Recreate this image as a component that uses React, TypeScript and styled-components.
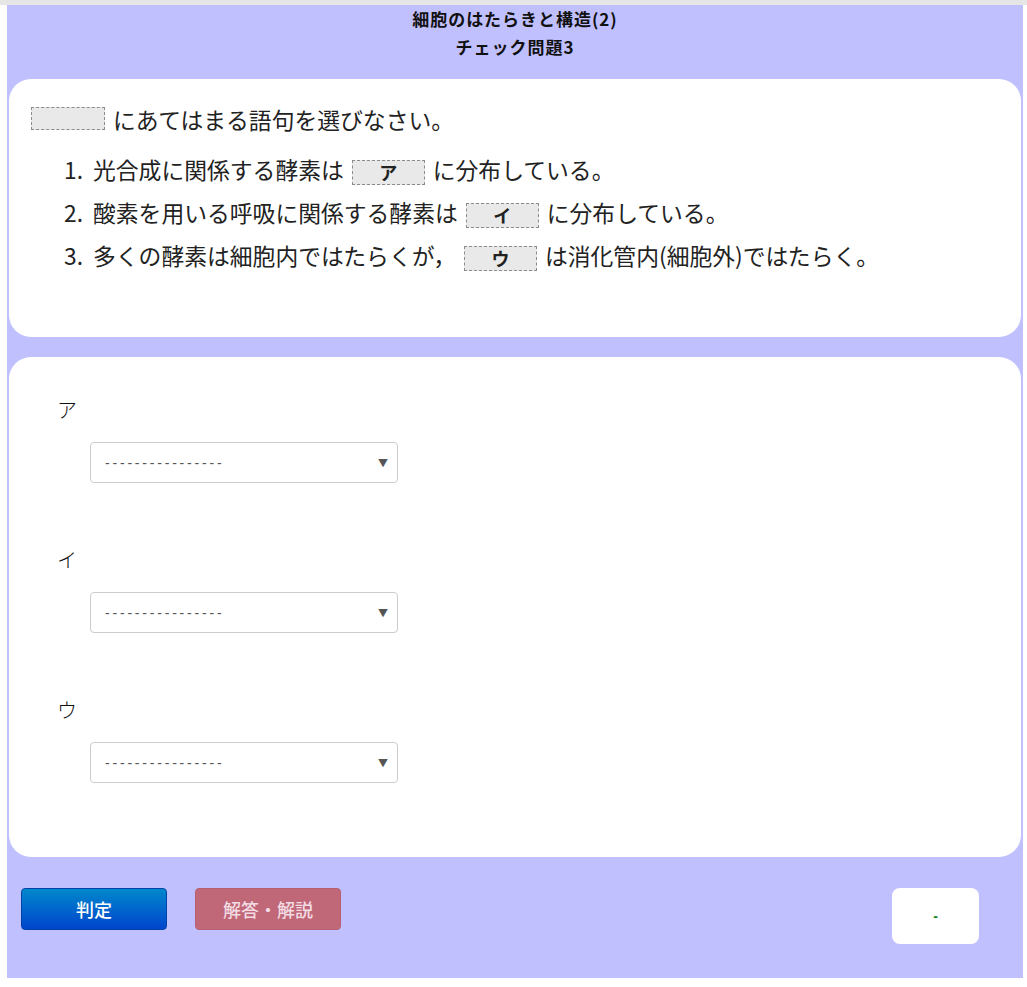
import React from 'react';
import styled, { createGlobalStyle } from 'styled-components';

const GlobalStyle = createGlobalStyle`
    body {
        margin: 0;
        background: #ffffff;
        font-family: "Noto Sans CJK JP", "Noto Sans", sans-serif;
        color: #222;
    }
`;

const TopLine = styled.div`
    height: 5px;
    background: #e6e6e6;
`;

const Outer = styled.div`
    padding: 0 4px 0 7px;
`;

const Stage = styled.div`
    background: #c0c0ff;
    height: 973px;
    display: flex;
    flex-direction: column;
    padding: 0 2px;
`;

const Header = styled.header`
    height: 74px;
    display: flex;
    flex-direction: column;
    align-items: center;
    font-size: 17px;
    font-weight: 700;
    line-height: 28px;
    letter-spacing: 1px;
    color: #111;
`;

const Card = styled.section<{ $height: number }>`
    background: #fff;
    border-radius: 22px;
    height: ${p => p.$height}px;
    box-sizing: border-box;
`;

const QuestionCard = styled(Card)`
    padding: 19px 22px 0;
    font-size: 22.8px;
    line-height: 43px;
    color: #222;
`;

const AnswerCard = styled(Card)`
    margin-top: 20px;
    padding: 38px 0 0 48px;
    display: flex;
    flex-direction: column;
    gap: 62px;
`;

const Blank = styled.span<{ $w: number; $first?: boolean }>`
    display: inline-flex;
    align-items: center;
    justify-content: center;
    width: ${p => p.$w}px;
    height: ${p => (p.$first ? 23 : 25)}px;
    box-sizing: border-box;
    border: 1px dashed #8c8c8c;
    background: #e9e9e9;
    vertical-align: -1px;
    font-size: 18px;
    font-weight: 700;
    line-height: 1;
    margin: 0 8px 0 ${p => (p.$first ? 0 : 8)}px;
    color: #222;
`;

const Intro = styled.div`
    margin-bottom: 7px;
`;

const List = styled.ol`
    margin: 0;
    padding-left: 33px;
    list-style: none;
`;

const Item = styled.li``;

const Num = styled.span`
    display: inline-block;
    width: 29px;
`;

const Group = styled.div`
    display: flex;
    flex-direction: column;
    gap: 17px;
`;

const Label = styled.div`
    font-size: 20px;
    line-height: 30px;
    font-weight: 300;
    color: #111;
`;

const SelectWrap = styled.div`
    position: relative;
    margin-left: 33px;
    width: 308px;
`;

const Select = styled.select`
    appearance: none;
    width: 100%;
    height: 41px;
    box-sizing: border-box;
    border: 1px solid #cccccc;
    border-radius: 4px;
    background: #fff;
    padding: 0 14px;
    font-family: "Liberation Sans", Arial, sans-serif;
    font-size: 14px;
    letter-spacing: 2.8px;
    color: #555;
`;

const Arrow = styled.span`
    position: absolute;
    right: 10px;
    top: 13px;
    font-size: 10px;
    color: #555;
    pointer-events: none;
`;

const Footer = styled.div`
    margin-top: 31px;
    display: flex;
    align-items: flex-start;
    padding: 0 42px 0 12px;
`;

const Button = styled.button<{ $tone: 'blue' | 'rose' }>`
    width: 146px;
    height: 42px;
    border-radius: 4px;
    border: 1px solid ${p => (p.$tone === 'blue' ? '#0044aa' : '#b86070')};
    background: ${p => (p.$tone === 'blue'
        ? 'linear-gradient(to bottom, #0088cc, #0044cc)'
        : '#c06878')};
    color: ${p => (p.$tone === 'blue' ? '#ffffff' : '#f3dce4')};
    font-family: "Noto Sans CJK JP", sans-serif;
    font-size: 18px;
    font-weight: 500;
    margin-right: 28px;
    cursor: pointer;
`;

const Spacer = styled.div`
    flex: 1;
`;

const ScoreBox = styled.div`
    width: 87px;
    height: 56px;
    border-radius: 8px;
    background: #fff;
    display: flex;
    align-items: center;
    justify-content: center;
    color: #118811;
    font-family: "Liberation Sans", Arial, sans-serif;
    font-size: 14px;
    font-weight: 700;
`;

const labels = ['ア', 'イ', 'ウ'];

const App: React.FC = () => {
    return (
        <>
            <GlobalStyle />
            <TopLine />
            <Outer>
                <Stage>
                    <Header>
                        <div>細胞のはたらきと構造(2)</div>
                        <div>チェック問題3</div>
                    </Header>
                    <QuestionCard $height={258}>
                        <Intro>
                            <Blank $w={74} $first />にあてはまる語句を選びなさい。
                        </Intro>
                        <List>
                            <Item><Num>1.</Num>光合成に関係する酵素は<Blank $w={73}>ア</Blank>に分布している。</Item>
                            <Item><Num>2.</Num>酸素を用いる呼吸に関係する酵素は<Blank $w={73}>イ</Blank>に分布している。</Item>
                            <Item><Num>3.</Num>多くの酵素は細胞内ではたらくが，<Blank $w={73}>ウ</Blank>は消化管内(細胞外)ではたらく。</Item>
                        </List>
                    </QuestionCard>
                    <AnswerCard $height={500}>
                        {labels.map(l => (
                            <Group key={l}>
                                <Label>{l}</Label>
                                <SelectWrap>
                                    <Select defaultValue="">
                                        <option value="">----------------</option>
                                    </Select>
                                    <Arrow>▼</Arrow>
                                </SelectWrap>
                            </Group>
                        ))}
                    </AnswerCard>
                    <Footer>
                        <Button $tone="blue">判定</Button>
                        <Button $tone="rose">解答・解説</Button>
                        <Spacer />
                        <ScoreBox>-</ScoreBox>
                    </Footer>
                </Stage>
            </Outer>
        </>
    );
};

export default App;
